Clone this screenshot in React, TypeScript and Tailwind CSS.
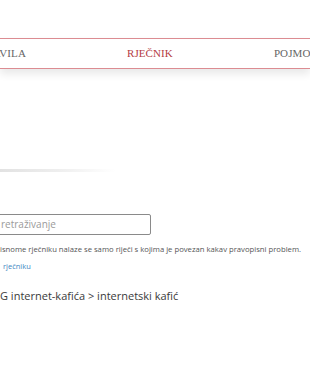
import React from 'react';

const App = () => {
  return (
    <div className="w-[310px] h-[375px] overflow-hidden bg-white font-['Open_Sans',sans-serif]">
      <div className="h-[38px]" />
      <nav className="h-[31px] border-y border-[#dc8c92] bg-white shadow-[0_5px_8px_rgba(0,0,0,0.09)] flex items-center overflow-hidden">
        <div className="flex gap-[101px] -ml-[21px] whitespace-nowrap font-['Liberation_Serif',serif] text-[11px] tracking-[0.1px]">
          <span className="text-[#666]">PRAVILA</span>
          <span className="text-[#b43c43]">RJEČNIK</span>
          <span className="text-[#666]">POJMOVNIK</span>
        </div>
      </nav>
      <div className="h-[100px]" />
      <div className="h-[3px] w-[115px] bg-linear-to-r from-[#e2e2e2] via-[#eeeeee] to-transparent" />
      <div className="h-[42px]" />
      <div className="-ml-[10px] w-[161px] h-[21px] border border-[#8a8a8a] rounded-[2px] flex items-center pl-[10px]">
        <span className="text-[10px] text-[#9a9a9a]">retraživanje</span>
      </div>
      <p className="mt-[9px] text-[7.7px] leading-[10px] text-[#555] whitespace-nowrap">
        isnome rječniku nalaze se samo riječi s kojima je povezan kakav pravopisni problem.
      </p>
      <p className="mt-[7px] text-[7.5px] leading-[10px] text-[#3d88c2] pl-[3px]">rječniku</p>
      <h2 className="mt-[17px] text-[11px] leading-[16px] text-[#3a3a3a] whitespace-nowrap">
        G internet-kafića &gt; internetski kafić
      </h2>
    </div>
  );
};

export default App;
